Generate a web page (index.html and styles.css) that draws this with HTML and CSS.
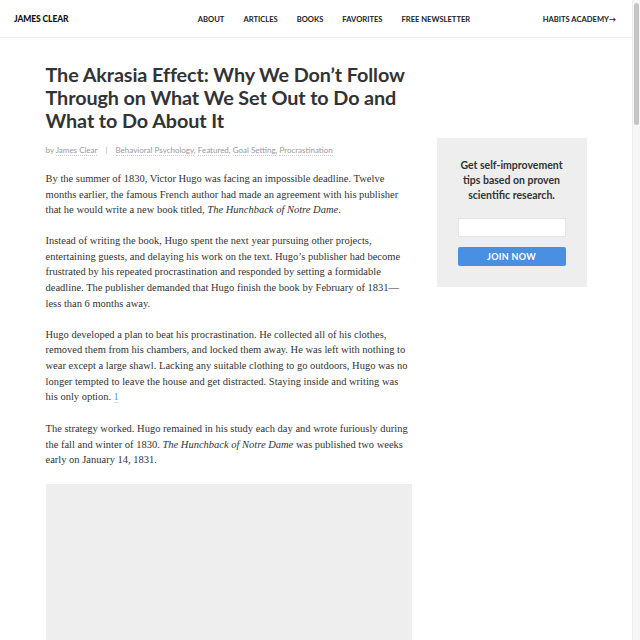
FILE: index.html
```html
<!DOCTYPE html>
<html lang="en">
<head>
<meta charset="utf-8">
<title>The Akrasia Effect</title>
<link rel="stylesheet" href="styles.css">
</head>
<body>
<header class="site-header">
  <a class="logo" href="#">JAMES CLEAR</a>
  <nav class="main-nav">
    <a href="#">ABOUT</a>
    <a href="#">ARTICLES</a>
    <a href="#">BOOKS</a>
    <a href="#">FAVORITES</a>
    <a href="#">FREE NEWSLETTER</a>
  </nav>
  <div class="header-right"><a href="#">HABITS ACADEMY<span class="arrow">→</span></a></div>
</header>
<div class="page">
  <main class="article">
    <h1 class="title">The Akrasia Effect: Why We Don’t Follow Through on What We Set Out to Do and What to Do About It</h1>
    <div class="meta">
      <span>by <a href="#">James Clear</a></span>
      <span class="sep">|</span>
      <span><a href="#">Behavioral Psychology</a>, <a href="#">Featured</a>, <a href="#">Goal Setting</a>, <a href="#">Procrastination</a></span>
    </div>
    <p>By the summer of 1830, Victor Hugo was facing an impossible deadline. Twelve months earlier, the famous French author had made an agreement with his publisher that he would write a new book titled, <em>The Hunchback of Notre Dame</em>.</p>
    <p>Instead of writing the book, Hugo spent the next year pursuing other projects, entertaining guests, and delaying his work on the text. Hugo’s publisher had become frustrated by his repeated procrastination and responded by setting a formidable deadline. The publisher demanded that Hugo finish the book by February of 1831—less than 6 months away.</p>
    <p>Hugo developed a plan to beat his procrastination. He collected all of his clothes, removed them from his chambers, and locked them away. He was left with nothing to wear except a large shawl. Lacking any suitable clothing to go outdoors, Hugo was no longer tempted to leave the house and get distracted. Staying inside and writing was his only option. <a class="fn" href="#">1</a></p>
    <p>The strategy worked. Hugo remained in his study each day and wrote furiously during the fall and winter of 1830. <em>The Hunchback of Notre Dame</em> was published two weeks early on January 14, 1831.</p>
    <div class="figure"></div>
  </main>
  <aside class="sidebar">
    <div class="signup">
      <p class="signup-text">Get self-improvement tips based on proven scientific research.</p>
      <input class="email" type="text" aria-label="Email">
      <button class="join">JOIN NOW</button>
    </div>
  </aside>
</div>
<div class="scrollbar" aria-hidden="true"><div class="thumb"></div></div>
</body>
</html>
```
FILE: styles.css
```css
body {
  margin: 0 8px 0 0;
  background: #fff;
  color: #333;
  font-family: Lato, "Liberation Sans", sans-serif;
}
a {
  color: inherit;
  text-decoration: none;
}
.scrollbar {
  position: fixed;
  top: 0;
  right: 0;
  width: 8px;
  height: 100vh;
  background: #f6f6f6;
  border-left: 1px solid #ececec;
  box-sizing: border-box;
}
.thumb {
  margin: 3px 1px 0 1px;
  height: 122px;
  background: #c4c4c4;
  border-radius: 3px;
}
.site-header {
  display: flex;
  align-items: center;
  height: 37px;
  padding: 0 16px 0 14px;
  border-bottom: 1px solid #ececec;
  font-weight: 700;
  font-size: 7.6px;
  color: #222;
}
.logo {
  flex: 1;
  font-size: 8.5px;
  font-weight: 900;
  color: #111;
  letter-spacing: -0.1px;
}
.main-nav {
  display: flex;
  gap: 19px;
  margin-left: 38px;
}
.header-right {
  flex: 1;
  text-align: right;
}
.arrow {
  font-size: 7px;
}
.page {
  display: flex;
  gap: 25px;
  width: 541px;
  margin: 0 auto;
  align-items: flex-start;
}
.article {
  width: 366px;
  flex: none;
}
.title {
  margin: 25px 0 0;
  font-size: 19.8px;
  line-height: 23px;
  font-weight: 700;
  color: #333;
  letter-spacing: -0.1px;
}
.meta {
  margin: 13px 0 16px;
  font-size: 8px;
  color: #999;
  display: flex;
  gap: 8px;
}
.meta a {
  border-bottom: 1px dotted #ccc;
}
.sep {
  color: #aaa;
}
.article p {
  font-family: "Liberation Serif", "DejaVu Serif", serif;
  font-size: 10.5px;
  line-height: 15.6px;
  color: #333;
  margin: 0 0 15.5px;
}
.fn {
  color: #4a90e2;
  border-bottom: 1px solid #cfe0f5;
  font-size: 9.5px;
}
.figure {
  height: 400px;
  background: #eee;
}
.sidebar {
  width: 150px;
  flex: none;
  margin-top: 100px;
}
.signup {
  background: #eee;
  padding: 20px 21px 21px;
  text-align: center;
}
.signup-text {
  margin: 0 0 15px;
  font-size: 10.5px;
  line-height: 15px;
  font-weight: 700;
  color: #333;
}
.email {
  display: block;
  width: 108px;
  height: 19px;
  box-sizing: border-box;
  border: 1px solid #e4e4e4;
  background: #fff;
  margin: 0 auto 10px;
}
.join {
  display: block;
  width: 108px;
  height: 19px;
  margin: 0 auto;
  border: 0;
  border-radius: 2px;
  background: #4a90e2;
  color: #fff;
  font-family: Lato, "Liberation Sans", sans-serif;
  font-weight: 700;
  font-size: 9px;
  letter-spacing: 0.3px;
}
```
